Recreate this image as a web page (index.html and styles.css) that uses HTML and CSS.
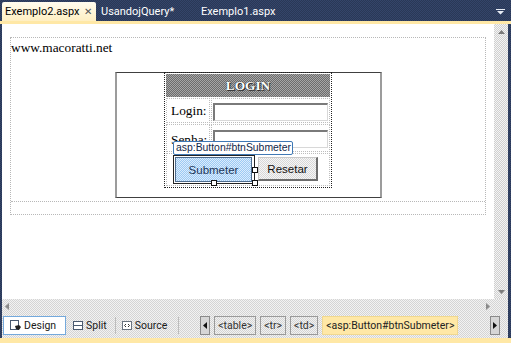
FILE: index.html
```html
<!DOCTYPE html>
<html>
<head>
<meta charset="utf-8">
<link rel="stylesheet" href="styles.css">
</head>
<body>
<div class="window">
  <div class="tabbar">
    <div class="tab active"><span class="tab-name">Exemplo2.aspx</span><span class="close">✕</span></div>
    <div class="tab">UsandojQuery*</div>
    <div class="tab">Exemplo1.aspx</div>
    <div class="tab-spacer"></div>
    <svg class="tab-menu" width="9" height="6" viewBox="0 0 9 6"><path d="M0 0h9v1H0z M1 2h7L4.5 5.5z" fill="#e8ecf4"/></svg>
  </div>
  <div class="tabline"></div>
  <div class="editor">
    <div class="canvas">
      <div class="form">
        <div class="block">
          <p class="site">www.macoratti.net</p>
          <div class="outer">
            <div class="login">
              <div class="hdr">LOGIN</div>
              <div class="row row-login">
                <div class="cell label">Login:</div>
                <div class="cell field"><div class="input"></div></div>
              </div>
              <div class="row row-senha">
                <div class="cell label">Senha:</div>
                <div class="cell field"><div class="input"></div></div>
              </div>
              <div class="row row-buttons">
                <div class="cell buttons">
                  <div class="btn-wrap">
                    <div class="btn submit">Submeter</div>
                    <div class="smarttag">asp:Button#btnSubmeter</div>
                    <div class="sel-frame"></div>
                    <span class="handle h-right"></span>
                    <span class="handle h-bottom"></span>
                    <span class="handle h-corner"></span>
                  </div>
                  <div class="btn reset">Resetar</div>
                </div>
              </div>
            </div>
          </div>
        </div>
      </div>
    </div>
    <div class="vscroll">
      <svg width="7" height="4" viewBox="0 0 7 4"><path d="M3.5 0L7 4H0z" fill="#7a7a7a"/></svg>
      <svg width="7" height="4" viewBox="0 0 7 4"><path d="M0 0h7L3.5 4z" fill="#7a7a7a"/></svg>
    </div>
  </div>
  <div class="bottom">
    <div class="hscroll">
      <svg width="4" height="7" viewBox="0 0 4 7"><path d="M4 0v7L0 3.5z" fill="#8a8a8a"/></svg>
      <svg width="4" height="7" viewBox="0 0 4 7"><path d="M0 0v7l4-3.5z" fill="#8a8a8a"/></svg>
    </div>
    <div class="toolbar">
      <div class="mode active">
        <svg width="11" height="11" viewBox="0 0 11 11"><rect x="0.5" y="0.5" width="8" height="9" fill="#fff" stroke="#4a5a70"/><path d="M5 6l4-1 2 2-2 3-3-1z" fill="#222"/></svg>
        <span>Design</span>
      </div>
      <div class="mode">
        <svg width="10" height="9" viewBox="0 0 10 9"><rect x="0.5" y="0.5" width="9" height="8" fill="#fff" stroke="#4a5a70"/><path d="M1 4.5h8" stroke="#4a5a70"/></svg>
        <span>Split</span>
      </div>
      <div class="sep"></div>
      <div class="mode">
        <svg width="10" height="9" viewBox="0 0 10 9"><rect x="0.5" y="0.5" width="9" height="8" fill="#fff" stroke="#6a7480"/><path d="M4 3L2.5 4.5 4 6M6 3l1.5 1.5L6 6" stroke="#333" fill="none"/></svg>
        <span>Source</span>
      </div>
      <div class="sep sep2"></div>
      <div class="crumbs">
        <div class="arrow-btn"><svg width="4" height="7" viewBox="0 0 4 7"><path d="M4 0v7L0 3.5z" fill="#111"/></svg></div>
        <div class="crumb">&lt;table&gt;</div>
        <div class="crumb">&lt;tr&gt;</div>
        <div class="crumb">&lt;td&gt;</div>
        <div class="crumb current">&lt;asp:Button#btnSubmeter&gt;</div>
      </div>
      <div class="arrow-btn right"><svg width="4" height="7" viewBox="0 0 4 7"><path d="M0 0v7l4-3.5z" fill="#111"/></svg></div>
    </div>
  </div>
  <div class="bottomline"></div>
</div>
</body>
</html>
```

FILE: styles.css
```css
* { box-sizing: border-box; }

body {
  margin: 0;
  width: 511px;
  height: 343px;
  overflow: hidden;
  background: #2d3c5c;
  font-family: Roboto, "Noto Sans", sans-serif;
}

.window {
  display: flex;
  flex-direction: column;
  width: 511px;
  height: 343px;
  background: repeating-conic-gradient(#2a3856 0 25%, #34456a 0 50%) 0 0 / 2px 2px;
}

/* ---- tabs ---- */
.tabbar {
  height: 21px;
  display: flex;
  align-items: flex-end;
  padding-left: 2px;
  padding-right: 6px;
}
.tab {
  height: 19px;
  display: flex;
  align-items: center;
  font-size: 11px;
  color: #fff;
  padding-left: 5px;
  width: 100px;
  white-space: nowrap;
}
.tab.active {
  width: 94px;
  padding-left: 3px;
  color: #000;
  background: linear-gradient(#fffcf0, #ffefc2);
  border-radius: 2px 2px 0 0;
  justify-content: space-between;
  padding-right: 4px;
}
.close { font-size: 10px; color: #555; }
.tab-spacer { flex: 1; }
.tab-menu { margin-bottom: 6px; }

.tabline { height: 3px; background: #ffe8a6; }

/* ---- editor ---- */
.editor {
  height: 275px;
  display: flex;
  margin: 0 3px 0 2px;
}
.canvas {
  flex: 1;
  background: #fff;
  padding-top: 13px;
}
.vscroll {
  width: 14px;
  background: repeating-conic-gradient(#cfcfcf 0 25%, #f4f4f4 0 50%) 0 0 / 2px 2px;
  display: flex;
  flex-direction: column;
  justify-content: space-between;
  align-items: center;
  padding: 6px 0 5px;
}

.form {
  margin: 0 8px;
  height: 178px;
  border: 1px dotted #b8b8b8;
}
.block {
  height: 164px;
  border-bottom: 1px dotted #b8b8b8;
}
.site {
  margin: 0;
  padding-top: 2px;
  font: 13.33px/15px "Liberation Serif", serif;
  color: #000;
}

.outer {
  width: 267px;
  height: 126px;
  margin: 17px auto 0;
  border-top: 1px solid #404040;
  border-bottom: 1px solid #404040;
  border-left: 2px solid #9c9c9c;
  border-right: 2px solid #9c9c9c;
  display: flex;
  justify-content: center;
  align-items: flex-start;
}

.login {
  width: 168px;
  height: 116px;
  margin-top: -1px;
  border: 1px dotted #222;
  padding: 1px;
  display: flex;
  flex-direction: column;
  gap: 1px;
  font: 13.33px "Liberation Serif", serif;
}
.hdr {
  height: 23px;
  background: repeating-conic-gradient(#6c6c6c 0 25%, #a6a6a6 0 50%) 0 0 / 2px 2px;
  color: #fff;
  font-weight: bold;
  display: flex;
  align-items: center;
  justify-content: center;
  text-shadow: 1px 1px 0 #303030, 0 0 1px #000;
}
.row { display: flex; gap: 1px; }
.row-login { height: 25px; }
.row-senha { height: 28px; }
.row-buttons { height: 33px; }
.cell {
  border: 1px dotted #bdbdbd;
  display: flex;
  align-items: center;
}
.label { width: 44px; padding-left: 4px; }
.field { flex: 1; padding-left: 1px; }
.row-login .field { align-items: flex-start; padding-top: 4px; }
.row-senha .field { align-items: flex-start; padding-top: 5px; }
.row-senha .label { align-items: flex-start; padding-top: 7px; }
.input {
  width: 115px;
  height: 18px;
  background: #fff;
  border-top: 2px solid #7a7a7a;
  border-left: 2px solid #7a7a7a;
  border-right: 1px solid #d8d8d8;
  border-bottom: 1px solid #d8d8d8;
}
.buttons {
  flex: 1;
  justify-content: center;
  gap: 6px;
  padding-right: 3px;
  align-items: flex-start;
  padding-top: 3px;
}

.btn-wrap { position: relative; }
.btn {
  display: flex;
  align-items: center;
  justify-content: center;
  font: 11.5px "Liberation Sans", Arial, sans-serif;
}
.submit {
  width: 77px;
  height: 25px;
  color: #1c3658;
  background: repeating-conic-gradient(#9ccaf4 0 25%, #dcecfc 0 50%) 0 0 / 2px 2px;
  border: 1px solid #4c6a8c;
}
.reset {
  width: 60px;
  height: 24px;
  color: #111;
  background: repeating-conic-gradient(#d8d8d8 0 25%, #f6f6f6 0 50%) 0 0 / 2px 2px;
  border-top: 1px solid #c8c8c8;
  border-left: 1px solid #c8c8c8;
  border-right: 2px solid #6c6c6c;
  border-bottom: 2px solid #6c6c6c;
}
.smarttag {
  position: absolute;
  left: -2px;
  top: -16px;
  width: 120px;
  height: 14px;
  background: #fff;
  border: 1px solid #3f78b4;
  border-radius: 2px;
  font: 10.4px/12px "Liberation Sans", Arial, sans-serif;
  color: #12284a;
  padding-left: 2px;
  white-space: nowrap;
}
.sel-frame {
  position: absolute;
  left: -2px;
  top: -2px;
  width: 82px;
  height: 29px;
  border: 1px solid #222;
  pointer-events: none;
}
.handle {
  position: absolute;
  width: 6px;
  height: 6px;
  background: #fff;
  border: 1px solid #111;
}
.h-right { left: 77px; top: 10px; }
.h-bottom { left: 36px; top: 23px; }
.h-corner { left: 77px; top: 23px; }

/* ---- bottom ---- */
.bottom {
  height: 39px;
  margin: 0 3px 0 2px;
  background: repeating-conic-gradient(#d4d4d4 0 25%, #f2f2f2 0 50%) 0 0 / 2px 2px;
  display: flex;
  flex-direction: column;
}
.hscroll {
  height: 15px;
  display: flex;
  justify-content: space-between;
  align-items: center;
  padding: 0 18px 0 3px;
}
.toolbar {
  height: 24px;
  display: flex;
  align-items: flex-start;
  padding: 2px 0 0 1px;
  font-size: 10.5px;
  color: #1a1a1a;
}
.mode {
  height: 19px;
  display: flex;
  align-items: center;
  gap: 3px;
  padding: 0 4px 0 2px;
}
.mode.active {
  width: 63px;
  padding-left: 6px;
  margin-right: 5px;
  background: #fff;
  border: 1px solid #74a9dc;
}
.sep {
  width: 1px;
  height: 17px;
  margin: 1px 4px 0 4px;
  background: #bcbcbc;
}
.sep2 { margin-left: 7px; }
.crumbs {
  display: flex;
  gap: 4px;
  margin-left: 17px;
  flex: 1;
}
.arrow-btn {
  width: 10px;
  height: 19px;
  border: 1px solid #8a8a8a;
  background: #d6d6d6;
  display: flex;
  align-items: center;
  justify-content: center;
}
.arrow-btn.right { margin-right: 8px; }
.crumb {
  height: 19px;
  padding: 0 3px;
  border: 1px solid #9a9a9a;
  display: flex;
  align-items: center;
  color: #333;
}
.crumb.current {
  background: #ffe8a6;
  border-color: #f0d890;
  color: #222;
}

.bottomline { flex: 1; background: #ffe8a6; }
```
